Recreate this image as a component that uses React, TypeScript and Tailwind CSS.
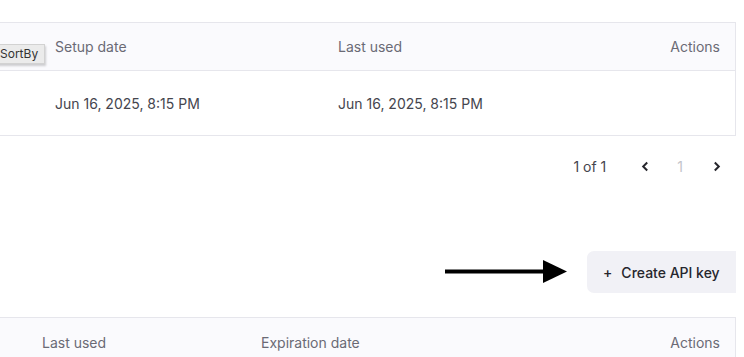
import React from "react";

export default function App() {
  return (
    <div className="relative w-[744px] h-[357px] overflow-hidden bg-white text-[14px]" style={{ fontFamily: "Inter, 'Noto Sans', sans-serif" }}>
      <div className="w-[736px] pt-[22px]">
        {/* Top table */}
        <div className="border-y border-r border-[#e6e6ec]">
          <div className="flex items-center h-[48px] bg-[#fafafd] border-b border-[#e6e6ec] text-[#6a6a75]">
            <div className="w-[338px] pl-[55px]">Setup date</div>
            <div className="flex-1">Last used</div>
            <div className="pr-[15px]">Actions</div>
          </div>
          <div className="flex items-center h-[64px] text-[#45454e]">
            <div className="w-[338px] pl-[55px]">Jun 16, 2025, 8:15 PM</div>
            <div className="flex-1">Jun 16, 2025, 8:15 PM</div>
          </div>
        </div>

        {/* Pagination */}
        <div className="flex items-center justify-end h-[60px] text-[#45454e]">
          <span className="mr-[35px]">1 of 1</span>
          <svg width="8" height="11" viewBox="0 0 8 11" className="mr-[28px]"><path d="M6.2 1.5 L2.2 5.5 L6.2 9.5" fill="none" stroke="#26262c" strokeWidth="2" /></svg>
          <span className="text-[#c4c4ca] mr-[30px]">1</span>
          <svg width="8" height="11" viewBox="0 0 8 11" className="mr-[15px]"><path d="M1.8 1.5 L5.8 5.5 L1.8 9.5" fill="none" stroke="#26262c" strokeWidth="2" /></svg>
        </div>

        {/* Create button row */}
        <div className="flex items-center justify-end mt-[55px] h-[42px]">
          <svg width="124" height="26" viewBox="0 0 124 26" className="mr-[18px]">
            <path d="M0 12.5 H100" stroke="#000" strokeWidth="4" />
            <path d="M98 1 L122 12.5 L98 24 Z" fill="#000" />
          </svg>
          <button className="h-[42px] w-[149px] rounded-l-[7px] bg-[#f1f1f6] flex items-center pl-[16px] text-[#26262d] font-medium">
            <span className="mr-[9px]">+</span>Create API key
          </button>
        </div>

        {/* Second table */}
        <div className="mt-[24px] border-t border-r border-[#e6e6ec]">
          <div className="flex items-center h-[48px] bg-[#fafafd] text-[#6a6a75]">
            <div className="w-[261px] pl-[42px]">Last used</div>
            <div className="flex-1">Expiration date</div>
            <div className="pr-[15px]">Actions</div>
          </div>
        </div>
      </div>

      {/* SortBy tooltip */}
      <div className="absolute left-[-6px] top-[44px] h-[20px] pl-[5px] pr-[6px] flex items-center bg-[#ebebeb] border border-[#d2d2d2] text-[12px] text-[#333] shadow-[1px_2px_2px_rgba(0,0,0,0.18)]">
        SortBy
      </div>
    </div>
  );
}
